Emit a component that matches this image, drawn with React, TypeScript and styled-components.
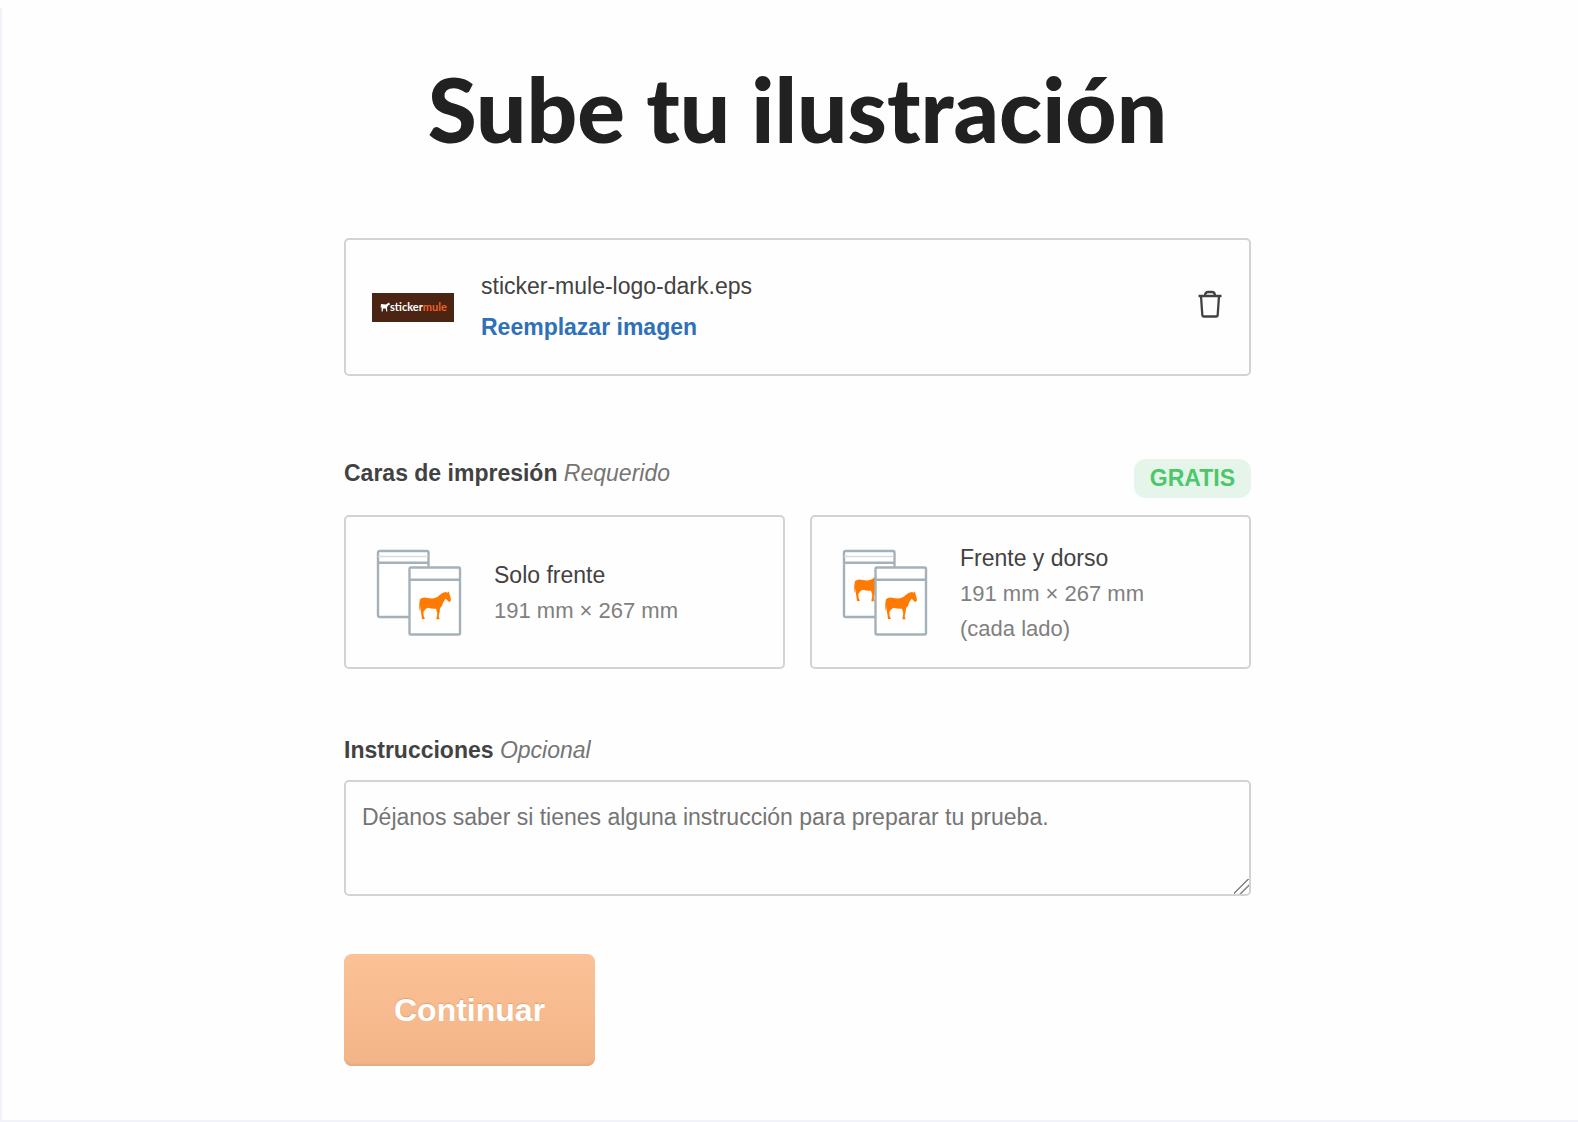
import React, { useState } from "react";
import styled, { createGlobalStyle } from "styled-components";

const GlobalStyle = createGlobalStyle`
  *, *::before, *::after { box-sizing: border-box; }
  body {
    margin: 0;
    background: #fefefe;
    color: #424242;
    font-family: "Liberation Sans", Arial, sans-serif;
    font-size: 23px;
    line-height: 35px;
  }
  button, textarea { font: inherit; }
`;

const Page = styled.main`
  min-height: calc(100vh - 8px);
  margin-top: 8px;
  padding: 46px 32px 48px 47px;
  border-left: 2px solid #f2f3fa;
  border-bottom: 2px solid #f2f3fa;
`;

const Title = styled.h1`
  margin: 0 0 74px;
  color: #212121;
  font-family: Lato, sans-serif;
  font-size: 89px;
  font-weight: 900;
  line-height: 110px;
  text-align: center;
`;

const Form = styled.form`
  max-width: 907px;
  margin: 0 auto;
`;

const FileCard = styled.section`
  display: flex;
  align-items: center;
  gap: 27px;
  min-height: 138px;
  margin-bottom: 80px;
  padding: 24px 26px;
  border: 2px solid #d3d3d3;
  border-radius: 5px;
`;

const Thumbnail = styled.svg`
  flex: none;
  width: 82px;
  height: 29px;
  background: #4b2414;
  font-family: Lato, sans-serif;
  font-size: 11px;
  font-weight: 700;
`;

const FileInfo = styled.div`
  display: flex;
  flex: 1;
  flex-direction: column;
  align-items: flex-start;
  gap: 6px;
`;

const ReplaceButton = styled.button`
  padding: 0;
  border: 0;
  background: none;
  color: #2f71b8;
  font-weight: 700;
  cursor: pointer;
`;

const IconButton = styled.button`
  display: flex;
  padding: 0 0 6px;
  border: 0;
  background: none;
  color: #424242;
  cursor: pointer;
`;

const Sides = styled.fieldset`
  min-width: 0;
  margin: 0 0 64px;
  padding: 0;
  border: 0;
`;

const SectionHead = styled.div`
  display: flex;
  align-items: flex-start;
  justify-content: space-between;
  margin-bottom: 17px;
`;

const FieldName = styled.span`
  font-weight: 700;
`;

const Hint = styled.em`
  color: #757575;
  font-weight: 400;
`;

const Badge = styled.span`
  margin-top: 3px;
  padding: 2px 16px;
  border-radius: 12px;
  background: #e6f5ea;
  color: #4cc76a;
  font-weight: 700;
`;

const Options = styled.div`
  display: grid;
  grid-template-columns: 1fr 1fr;
  gap: 25px;
`;

const OptionCard = styled.label<{ $selected: boolean }>`
  display: flex;
  align-items: center;
  min-height: 154px;
  padding: 17px 30px 15px;
  border: 2px solid ${(p) => (p.$selected ? "#2f71b8" : "#d3d3d3")};
  border-radius: 5px;
  cursor: pointer;
`;

const HiddenRadio = styled.input`
  width: 0;
  height: 0;
  margin: 0;
  appearance: none;
  outline: none;
`;

const OptionText = styled.span`
  display: flex;
  flex-direction: column;
  margin-left: 32px;
`;

const Size = styled.span`
  color: #808080;
  font-size: 22px;
`;

const InstructionsLabel = styled.label`
  display: block;
  margin-bottom: 12px;
`;

const Instructions = styled.textarea`
  display: block;
  width: 100%;
  height: 116px;
  margin-bottom: 58px;
  padding: 18px 16px;
  border: 2px solid #d3d3d3;
  border-radius: 5px;
  background: transparent;
  color: #424242;
  resize: vertical;

  &::placeholder { color: #757575; opacity: 1; }

  &::-webkit-resizer {
    background: linear-gradient(
      135deg,
      transparent 43%, #8a8a8a 45%, #8a8a8a 50%, transparent 52%,
      transparent 66%, #8a8a8a 68%, #8a8a8a 73%, transparent 75%
    );
  }
`;

const SubmitButton = styled.button`
  padding: 36px 50px;
  border: 0;
  border-radius: 8px;
  background: linear-gradient(#fcc196, #f1b587);
  box-shadow: inset 0 -3px 2px -1px #e3aa80;
  color: #fff;
  font-size: 32px;
  font-weight: 700;
  line-height: 40px;
  text-shadow: 0 -1px 1px #dba57c;
  cursor: pointer;
`;

const muleShape =
  "M240 268Q248 260 259 263Q270 266 282 265Q294 262 302 253Q308 247 318 246L323 248L327 244L328 251Q332 260 333 271L329 277L324 273L317 266Q312 271 309 279Q306 291 300 295L299 306L296 318L299 328H289L292 310L288 296Q276 297 263 293L256 298L250 306L251 318L255 326L246 328L244 312Q241 300 242 288L240 302Q237 300 238 280Z";

const Mule = ({ x = 0, y = 0 }: { x?: number; y?: number }) => (
  <path d={muleShape} fill="#ff7a00" transform={`translate(${x - 36} ${y - 39}) scale(.3333)`} />
);

const BagsIcon = ({ bothSides = false }: { bothSides?: boolean }) => (
  <svg width="86" height="88" viewBox="0 0 86 88" fill="#fff" stroke="#a5b1b8" strokeWidth="2.4" aria-hidden="true">
    <rect x="2" y="2" width="50.5" height="66" rx="1.5" />
    <path d="M2 7.5h50" stroke="#d5dce0" strokeWidth="1.6" />
    <path d="M2 13.7h50" />
    {bothSides && <g stroke="none"><Mule x={-31} y={-18} /></g>}
    <rect x="33.5" y="18.5" width="50.5" height="67" rx="1.5" />
    <path d="M33.5 30.8h50" />
    <g stroke="none"><Mule /></g>
  </svg>
);

const TrashIcon = () => (
  <svg width="26" height="30" viewBox="0 0 26 30" fill="none" stroke="currentColor" strokeWidth="2.3" strokeLinejoin="round" aria-hidden="true">
    <path d="M1.500 7h23M4 7l1.300 19Q5.400 27.500 7 27.500h12q1.600 0 1.700-1.500L22 7M8 7q0-4 3-4h4q3 0 3 4" />
  </svg>
);

const options = [
  { id: "front", name: "Solo frente", lines: ["191 mm × 267 mm"] },
  { id: "both", name: "Frente y dorso", lines: ["191 mm × 267 mm", "(cada lado)"] },
];

export default function App() {
  const [side, setSide] = useState("");

  return (
    <>
      <GlobalStyle />
      <Page>
        <Title>Sube tu ilustración</Title>
        <Form onSubmit={(e) => e.preventDefault()}>
          <FileCard>
            <Thumbnail viewBox="0 0 82 29">
              <path d="M9 11l5 .5 3-2 1 2-2 1-1 2 .3 4h-1l-.6-3h-2.500l-.6 3h-1V14l-1 1z" fill="#fff" />
              <text x="18" y="18" fill="#fff">sticker<tspan fill="#ee6223">mule</tspan></text>
            </Thumbnail>
            <FileInfo>
              <span>sticker-mule-logo-dark.eps</span>
              <ReplaceButton type="button">Reemplazar imagen</ReplaceButton>
            </FileInfo>
            <IconButton type="button" aria-label="Eliminar">
              <TrashIcon />
            </IconButton>
          </FileCard>

          <Sides aria-labelledby="sides-label">
            <SectionHead>
              <span id="sides-label">
                <FieldName>Caras de impresión</FieldName> <Hint>Requerido</Hint>
              </span>
              <Badge>GRATIS</Badge>
            </SectionHead>
            <Options>
              {options.map((o) => (
                <OptionCard key={o.id} htmlFor={o.id} $selected={side === o.id}>
                  <HiddenRadio id={o.id} type="radio" name="side" checked={side === o.id} onChange={() => setSide(o.id)} />
                  <BagsIcon bothSides={o.id === "both"} />
                  <OptionText>
                    <span>{o.name}</span>
                    {o.lines.map((line) => <Size key={line}>{line}</Size>)}
                  </OptionText>
                </OptionCard>
              ))}
            </Options>
          </Sides>

          <InstructionsLabel htmlFor="instructions">
            <FieldName>Instrucciones</FieldName> <Hint>Opcional</Hint>
          </InstructionsLabel>
          <Instructions id="instructions" placeholder="Déjanos saber si tienes alguna instrucción para preparar tu prueba." />

          <SubmitButton type="submit">Continuar</SubmitButton>
        </Form>
      </Page>
    </>
  );
}
